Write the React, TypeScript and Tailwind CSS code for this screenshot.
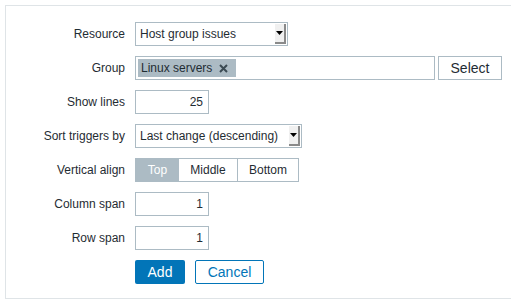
import React from "react"

const font = { fontFamily: '"Liberation Sans", Arial, sans-serif' }

function Label({ children }: { children: React.ReactNode }) {
  return <div className="flex h-6 items-center justify-end text-[12px] text-[#1f2c33]">{children}</div>
}

function FakeSelect({ value, width }: { value: string; width: string }) {
  return (
    <div className={`flex h-6 items-center justify-between border border-[#acbbc4] bg-white pl-[4px] pr-[1px] ${width}`}>
      <span className="text-[12px] text-[#1f2c33]">{value}</span>
      <div className="flex h-[20px] w-[11px] items-center justify-center border-b-2 border-r-2 border-b-[#8a8a8a] border-r-[#8a8a8a] bg-[#f0f0f0]">
        <svg width="7" height="4" viewBox="0 0 7 4">
          <path d="M0 0h7L3.5 4z" fill="#000" />
        </svg>
      </div>
    </div>
  )
}

function NumInput({ value }: { value: string }) {
  return (
    <div className="flex h-6 w-[74px] items-center justify-end border border-[#acbbc4] bg-white pr-[5px] text-[12px] text-[#1f2c33]">
      {value}
    </div>
  )
}

export default function App() {
  return (
    <div className="h-[305px] w-[511px] bg-white pl-[5px] pt-[5px]" style={font}>
      <div className="border-b border-l border-t border-[#dfe4e7] pb-[14px] pt-4">
        <div className="grid grid-cols-[119px_1fr] gap-x-[10px] gap-y-[10px]">
          <Label>Resource</Label>
          <FakeSelect value="Host group issues" width="w-[153px]" />

          <Label>Group</Label>
          <div className="flex items-center gap-[3px]">
            <div className="flex h-6 w-[300px] items-center border border-[#acbbc4] bg-white px-[2px]">
              <div className="flex h-[18px] w-[98px] items-center gap-[7px] bg-[#acbbc4] pl-[3px] text-[12px] text-[#1f2c33]">
                <span>Linux servers</span>
                <svg width="9" height="9" viewBox="0 0 9 9">
                  <path d="M1 1l7 7M8 1L1 8" stroke="#3b4a53" strokeWidth="2" />
                </svg>
              </div>
            </div>
            <button className="h-6 w-[64px] border border-[#acbbc4] bg-white text-[14px] text-[#1f2c33]">Select</button>
          </div>

          <Label>Show lines</Label>
          <NumInput value="25" />

          <Label>Sort triggers by</Label>
          <FakeSelect value="Last change (descending)" width="w-[167px]" />

          <Label>Vertical align</Label>
          <div className="flex h-6 w-[164px] border border-[#acbbc4] text-[12px]">
            <div className="flex w-[43px] items-center justify-center bg-[#acbbc4] text-white">Top</div>
            <div className="flex w-[59px] items-center justify-center border-r border-[#acbbc4] text-[#1f2c33]">Middle</div>
            <div className="flex flex-1 items-center justify-center text-[#1f2c33]">Bottom</div>
          </div>

          <Label>Column span</Label>
          <NumInput value="1" />

          <Label>Row span</Label>
          <NumInput value="1" />

          <div />
          <div className="flex gap-[10px]">
            <button className="h-6 w-[50px] rounded-[2px] bg-[#0275b8] text-[14px] text-white">Add</button>
            <button className="h-6 w-[69px] rounded-[2px] border border-[#0275b8] bg-white text-[14px] text-[#0275b8]">Cancel</button>
          </div>
        </div>
      </div>
    </div>
  )
}
